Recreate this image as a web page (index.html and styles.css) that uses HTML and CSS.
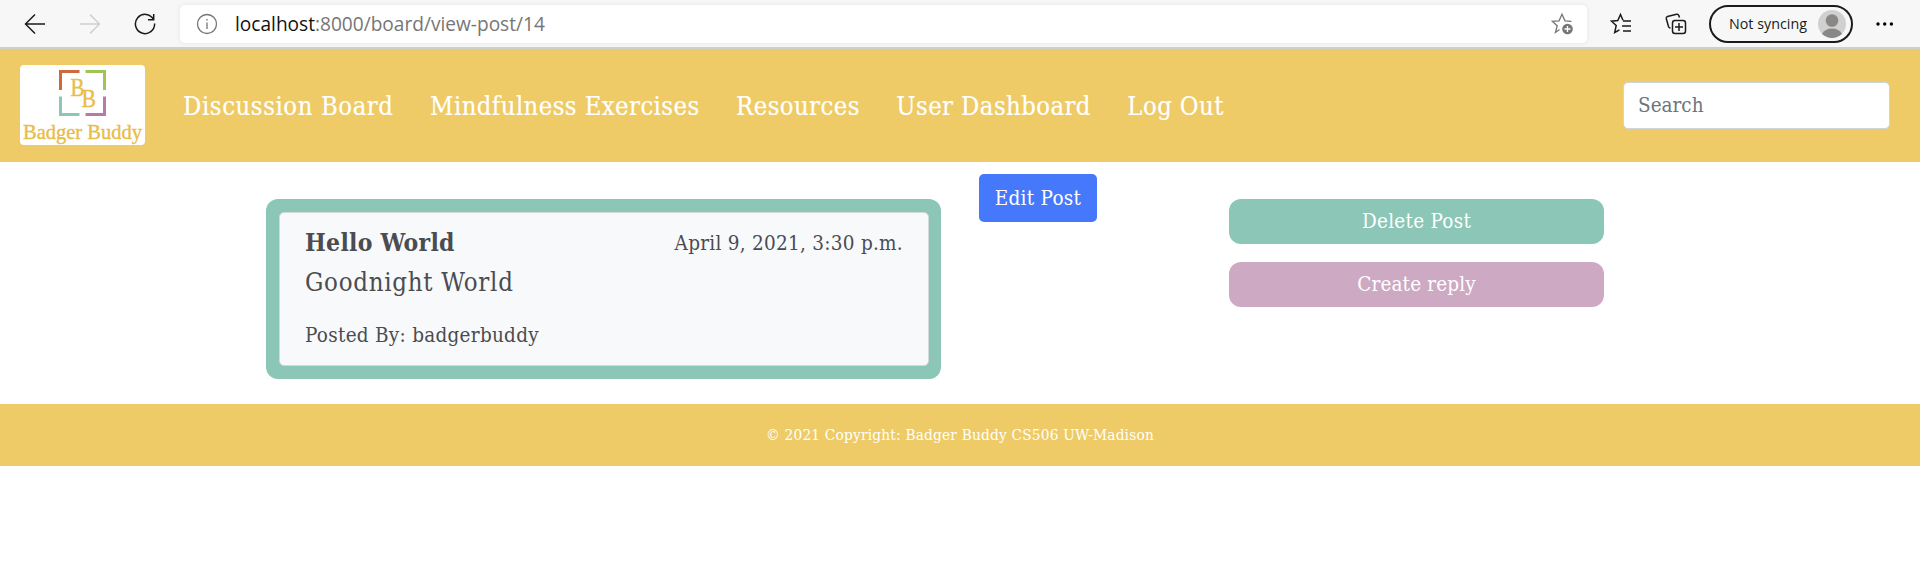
FILE: index.html
```html
<!DOCTYPE html>
<html lang="en">
<head>
<meta charset="utf-8">
<title>Badger Buddy</title>
<link rel="stylesheet" href="styles.css">
</head>
<body>
<div class="toolbar">
  <div class="history">
    <svg width="22" height="22" viewBox="0 0 22 22" class="line"><path d="M21 11H1.5M11 1.5L1.5 11l9.5 9.5"/></svg>
    <svg width="22" height="22" viewBox="0 0 22 22" class="line faint"><path d="M1 11h19.5M11 1.5l9.500 9.500-9.500 9.500"/></svg>
    <svg width="22" height="22" viewBox="0 0 22 22" class="line"><path d="M19.500 6.500A9.600 9.600 0 1 0 20.600 10.500M19.700 1v5.700H14"/></svg>
  </div>
  <div class="address">
    <svg width="22" height="22" viewBox="0 0 22 22" class="line gray"><circle cx="11" cy="11" r="9.500"/><path d="M11 9.500V16M11 6v1.600"/></svg>
    <span class="url"><b>localhost</b>:8000/board/view-post/14</span>
    <svg width="24" height="24" viewBox="0 0 24 24" class="line gray star"><path d="M8.500 17.500L4.500 20.500 6.200 13.700 1.200 9.300 8 8.800 11 2.200 14 8.800 20.500 9.300"/><circle cx="16.500" cy="17" r="5.300" class="solid"/><path d="M16.500 14v6M13.500 17h6" class="white"/></svg>
  </div>
  <svg width="22" height="22" viewBox="0 0 22 22" class="line favs"><path d="M13 7.200L10.500 1.500 7.800 7.500 1.500 8.200 6.200 12.500 4.700 19.500 9.500 16.800M13 8h8M12 13h9M13 18h8"/></svg>
  <svg width="22" height="22" viewBox="0 0 22 22" class="line collections"><rect x="7.500" y="7.500" width="13" height="13" rx="2.500"/><path d="M14 10v8M10 14h8M14.500 4.500L13.800 2.500Q13.300 1 11.500 1.300L2.500 3.500Q.9 4 1.300 5.700L3.500 13.500Q4 15 5.500 15"/></svg>
  <div class="profile">
    <span>Not syncing</span>
    <svg width="28" height="28" viewBox="0 0 28 28"><circle cx="14" cy="14" r="14" fill="#d2d0ce"/><circle cx="14" cy="10.500" r="6.300" fill="#8a8886"/><path d="M4 24Q7 18.500 14 18.500T24 24Q19 28 14 28T4 24Z" fill="#8a8886"/></svg>
  </div>
  <svg width="18" height="4" viewBox="0 0 18 4" class="more"><circle cx="2" cy="2" r="1.700"/><circle cx="8.700" cy="2" r="1.700"/><circle cx="15.400" cy="2" r="1.700"/></svg>
</div>
<nav class="nav">
  <svg class="logo" width="125" height="80" viewBox="0 0 125 80">
    <rect width="125" height="80" rx="4" fill="#fff"/>
    <g fill="none" stroke-width="3">
      <path d="M59.500 6.500H40.500V25" stroke="#d0693a"/>
      <path d="M65.500 6.500H84.500V25" stroke="#a0c556"/>
      <path d="M59.500 49.500H40.500V31.500" stroke="#8cc6b8"/>
      <path d="M65.500 49.500H84.500V31.500" stroke="#b87aa8"/>
    </g>
    <g class="logo-text">
      <text x="50.500" y="30.500" font-size="26" textLength="14" lengthAdjust="spacingAndGlyphs">B</text>
      <text x="61.500" y="42" font-size="26" textLength="14.500" lengthAdjust="spacingAndGlyphs">B</text>
      <text x="3" y="73.500" font-size="21.500" textLength="119" lengthAdjust="spacingAndGlyphs">Badger Buddy</text>
    </g>
  </svg>
  <div class="links">
    <a class="first">Discussion Board</a>
    <a>Mindfulness Exercises</a>
    <a>Resources</a>
    <a>User Dashboard</a>
    <a>Log Out</a>
  </div>
  <input class="search" type="text" placeholder="Search">
</nav>
<main class="content">
  <section class="post">
    <div class="card">
      <div class="card-head">
        <h1>Hello World</h1>
        <span class="date">April 9, 2021, 3:30 p.m.</span>
      </div>
      <p class="body">Goodnight World</p>
      <p class="author">Posted By: badgerbuddy</p>
    </div>
  </section>
  <a class="edit">Edit Post</a>
  <div class="actions">
    <a class="action delete">Delete Post</a>
    <a class="action reply">Create reply</a>
  </div>
</main>
<footer class="footer">© 2021 Copyright: Badger Buddy CS506 UW-Madison</footer>
</body>
</html>
```
FILE: styles.css
```css
* { box-sizing: border-box; }
body {
  margin: 0;
  background: #fff;
  color: #4a4c50;
  font-family: "DejaVu Serif Condensed", "DejaVu Serif", serif;
  font-stretch: condensed;
  font-size: 20.500px;
  letter-spacing: 0.270px;
}
h1, p { margin: 0; }
svg { flex: none; }
.toolbar {
  display: flex;
  align-items: center;
  height: 49px;
  background: #f7f7f7;
  border-bottom: 2px solid #cecece;
  font-family: "Open Sans", "Noto Sans", sans-serif;
  font-stretch: normal;
  letter-spacing: 0;
}
.history { display: flex; gap: 33px; width: 180px; padding-left: 24px; }
.line { fill: none; stroke: #1b1b1b; stroke-width: 1.500; }
.line.faint { stroke: #cfcfcf; }
.line.gray { stroke: #767676; stroke-width: 1.300; }
.line .solid { fill: #767676; stroke: none; }
.line .white { stroke: #fff; }
.address {
  display: flex;
  align-items: center;
  width: 1407px;
  height: 38px;
  padding: 0 12px 0 16px;
  background: #fff;
  border-radius: 5px;
  box-shadow: 0 0 5px #e4e4e4;
}
.url { margin-left: 17px; color: #767676; font-size: 19.100px; line-height: 38px; }
.url b { color: #111; font-weight: 400; }
.star { margin-left: auto; }
.favs { margin-left: 23px; }
.collections { margin-left: 33px; }
.profile {
  display: flex;
  align-items: center;
  justify-content: space-between;
  width: 144px;
  height: 38px;
  margin-left: 22px;
  padding: 0 5px 0 18px;
  border: 2px solid #1b1b1b;
  border-radius: 19px;
  color: #1b1b1b;
  font-size: 14.300px;
}
.more { margin-left: 23px; }
.nav {
  display: flex;
  align-items: center;
  height: 113px;
  padding: 0 30px 0 20px;
  background: #eecb66;
}
.logo { margin-bottom: 1px; overflow: visible; }
.logo-text {
  fill: #e8bd48;
  stroke: #e8bd48;
  stroke-width: 0.400;
  font-family: "Liberation Serif", serif;
  letter-spacing: 0;
}
.links {
  display: flex;
  gap: 36.500px;
  margin-left: 38px;
  color: #fff;
  font-size: 25.400px;
  letter-spacing: 0.430px;
  -webkit-text-stroke: 0.200px #fff;
}
.links .first { letter-spacing: 0.600px; }
.search {
  width: 267px;
  height: 47px;
  margin: 0 0 0 auto;
  padding: 0 15px 2px 14px;
  border: 1px solid #ced4da;
  border-radius: 5px;
  color: #6c757d;
  font: inherit;
}
.search::placeholder { color: #6c757d; opacity: 1; }
.content {
  display: flex;
  align-items: flex-start;
  height: 242px;
  padding: 12px 316px 0 266px;
}
.post {
  width: 675px;
  height: 180px;
  margin-top: 25px;
  padding: 13px 12px 13px 13px;
  background: #8cc6b7;
  border-radius: 12px;
}
.card {
  height: 154px;
  padding: 11px 25px;
  background: #f8f9fb;
  border: 1px solid #d3d8d8;
  border-radius: 5px;
}
.card-head { display: flex; justify-content: space-between; line-height: 38px; }
h1 { font-size: 24.500px; }
.body { font-size: 25.600px; letter-spacing: 0.700px; line-height: 40px; }
.author { margin-top: 14px; line-height: 38px; }
.edit {
  width: 118px;
  height: 48px;
  margin-left: 38px;
  background: #4678fb;
  border-radius: 5px;
  color: #fff;
  line-height: 48px;
  text-align: center;
}
.actions { display: grid; gap: 18px; width: 375px; margin: 25px 0 0 132px; }
.action { height: 45px; border-radius: 12px; color: #fff; line-height: 45px; text-align: center; }
.delete { background: #8cc6b7; }
.reply { background: #cda9c4; letter-spacing: 0.150px; }
.footer {
  height: 62px;
  background: #eecb66;
  color: #fff;
  font-size: 15.300px;
  letter-spacing: 0.180px;
  line-height: 62px;
  text-align: center;
}
```
